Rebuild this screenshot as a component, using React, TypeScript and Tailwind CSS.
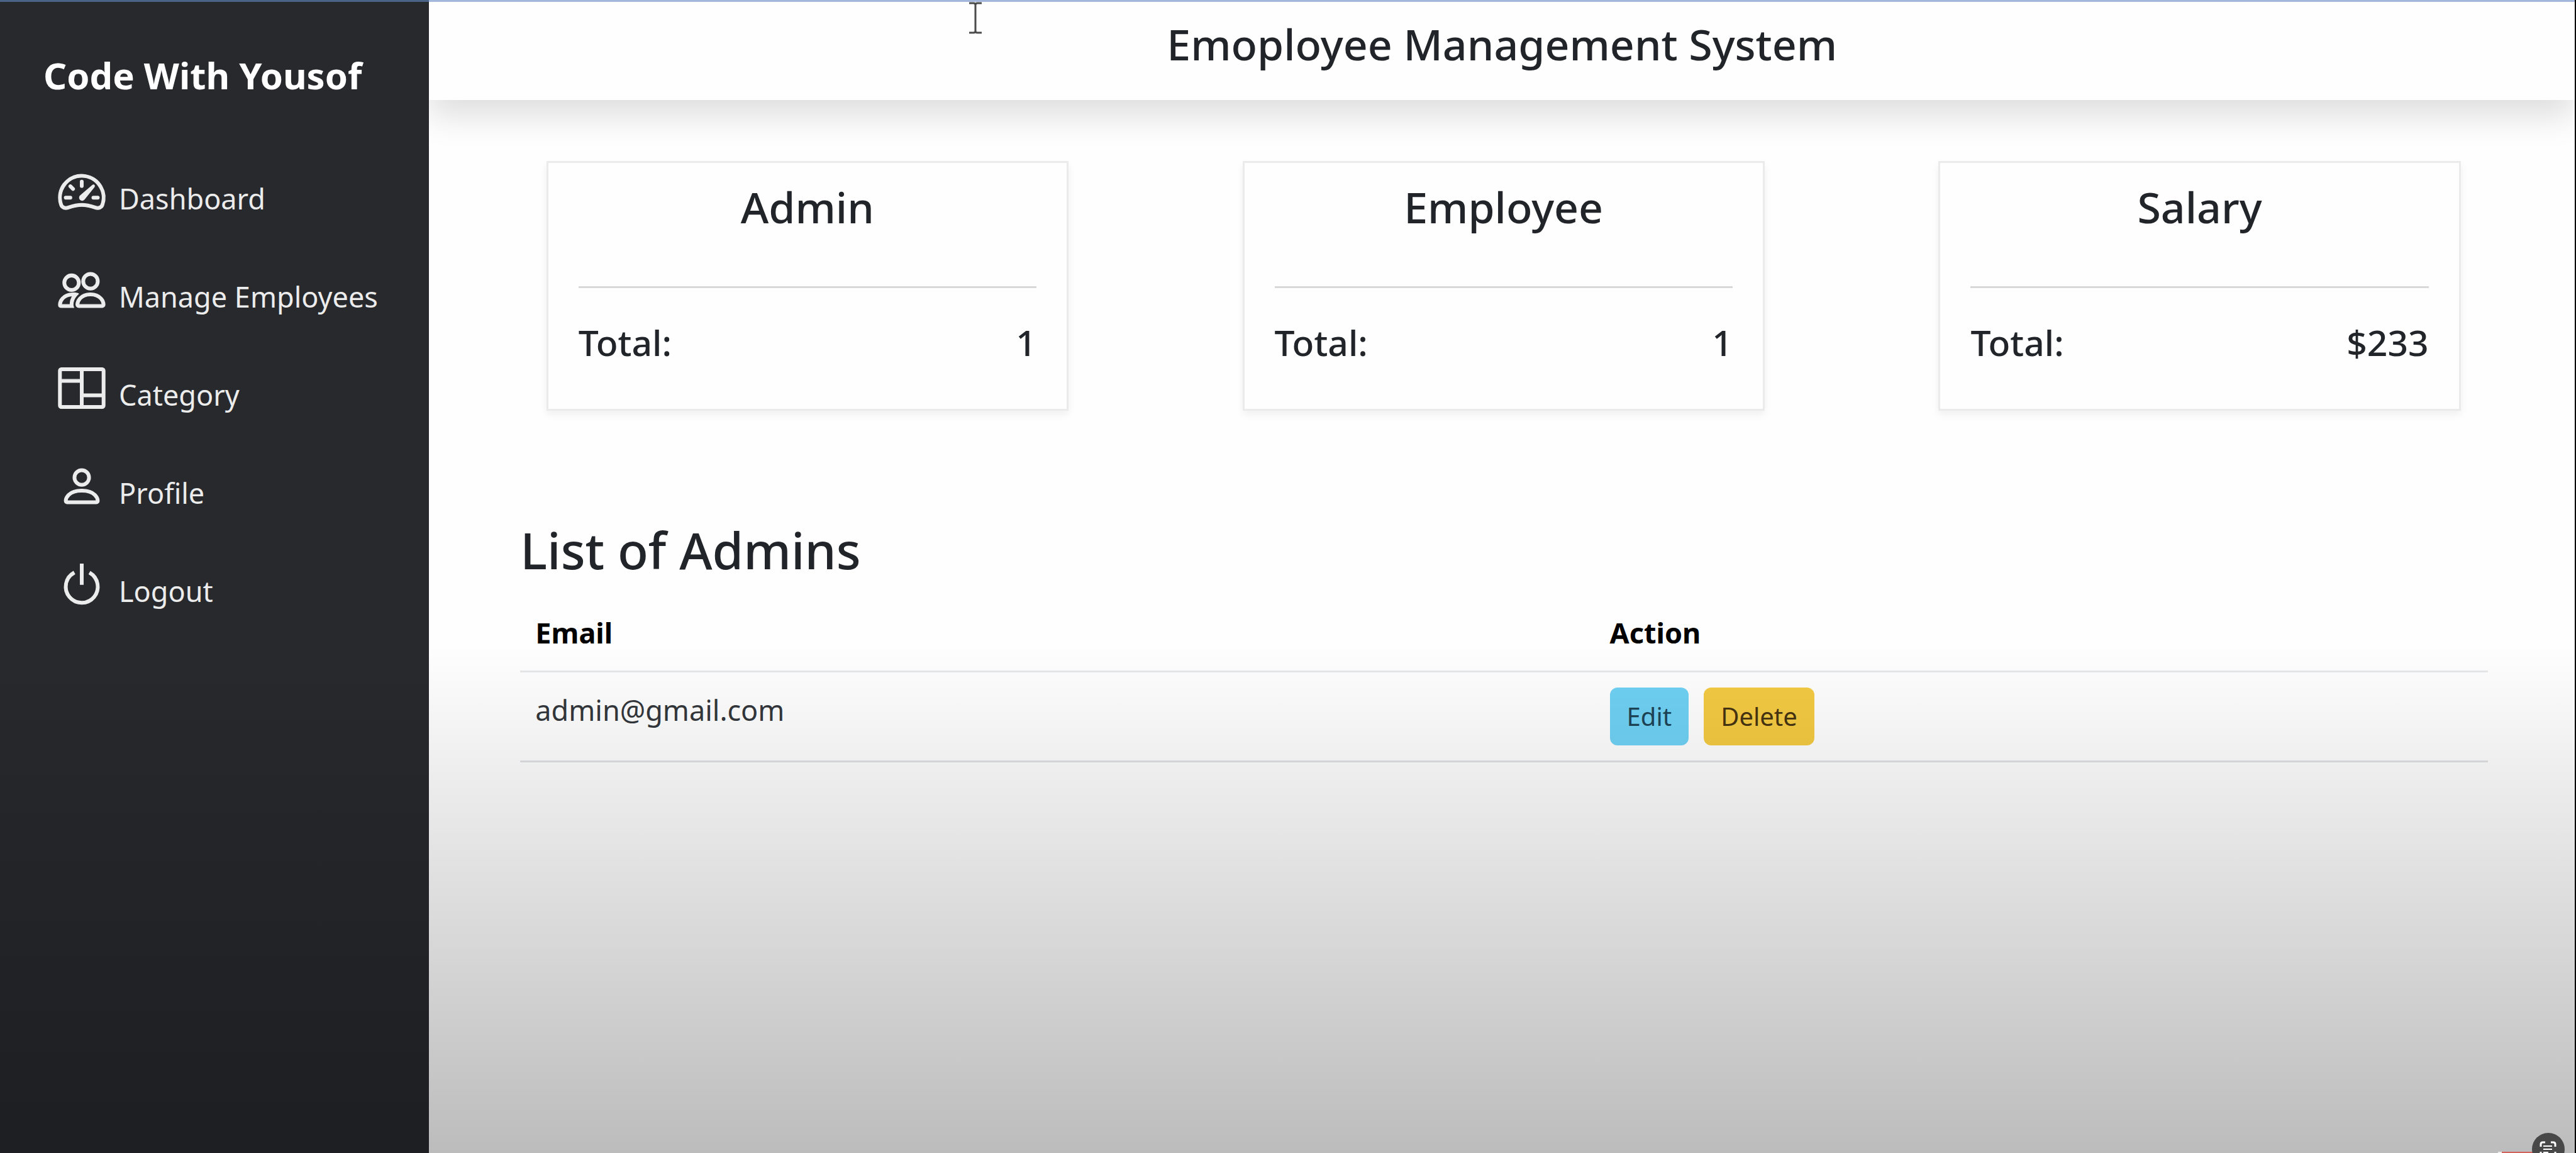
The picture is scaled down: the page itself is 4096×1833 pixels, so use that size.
import type { IconType } from "react-icons";
import { BsColumns, BsPeople, BsPerson, BsPower, BsSpeedometer2 } from "react-icons/bs";

const navItems: { label: string; href: string; Icon: IconType }[] = [
  { label: "Dashboard", href: "#dashboard", Icon: BsSpeedometer2 },
  { label: "Manage Employees", href: "#employees", Icon: BsPeople },
  { label: "Category", href: "#category", Icon: BsColumns },
  { label: "Profile", href: "#profile", Icon: BsPerson },
  { label: "Logout", href: "#logout", Icon: BsPower },
];

const summaries = [
  { title: "Admin", total: "1" },
  { title: "Employee", total: "1" },
  { title: "Salary", total: "$233" },
];

const admins = [{ email: "admin@gmail.com" }];

function Sidebar() {
  return (
    <aside className="relative z-10 w-1/6 shrink-0 bg-[#27292d] pt-[84px]">
      <a href="#dashboard" className="block pl-[69px] text-[58px] leading-[72px] font-bold text-white">
        Code With Yousof
      </a>
      <nav className="mt-[73px]">
        <ul>
          {navItems.map(({ label, href, Icon }) => (
            <li key={label}>
              <a
                href={href}
                className="flex items-end gap-[22px] py-[39px] pl-[93px] text-[45px] leading-[60px] text-[#ececec]"
              >
                <Icon
                  className="mb-1 size-[74px] shrink-0 overflow-visible stroke-current [stroke-width:0.3px]"
                  aria-hidden="true"
                />
                <span className="whitespace-nowrap">{label}</span>
              </a>
            </li>
          ))}
        </ul>
      </nav>
    </aside>
  );
}

function SummaryCard({ title, total }: { title: string; total: string }) {
  return (
    <section className="w-1/4 border-[3px] border-[#ebebeb] px-12 pt-7 pb-[70px] shadow-[0_6px_12px_rgba(0,0,0,0.06)]">
      <h2 className="text-center text-[68px] leading-[84px] font-medium">{title}</h2>
      <hr className="mt-[84px] border-t-[3px] border-[#d8d8d8]" />
      <div className="mt-[50px] flex justify-between text-[57px] leading-[72px] font-medium">
        <span>Total:</span>
        <span>{total}</span>
      </div>
    </section>
  );
}

function AdminTable() {
  return (
    <section className="mt-[173px] pr-[138px] pl-[145px]">
      <h2 className="text-[80px] leading-[96px] font-medium">List of Admins</h2>
      <table className="mt-6 w-full table-fixed border-collapse text-left text-[45px] leading-[72px]">
        <thead>
          <tr className="border-b-[3px] border-[#e6e8ea] font-bold text-black">
            <th scope="col" className="w-[54.6%] px-6 py-6">
              Email
            </th>
            <th scope="col" className="px-6 py-6">
              Action
            </th>
          </tr>
        </thead>
        <tbody>
          {admins.map(({ email }) => (
            <tr key={email} className="border-b-[3px] border-[#dfe1e4]">
              <td className="px-6 py-6 align-top text-[#33373b]">{email}</td>
              <td className="px-6 py-6">
                <div className="flex gap-6 text-[40px] leading-[60px]">
                  <button type="button" className="rounded-xl bg-[#6fd1f4] px-[27px] py-4 text-[#1d4456]">
                    Edit
                  </button>
                  <button type="button" className="rounded-xl bg-[#f4ca42] px-[27px] py-4 text-[#463411]">
                    Delete
                  </button>
                </div>
              </td>
            </tr>
          ))}
        </tbody>
      </table>
    </section>
  );
}

function TextCursor() {
  return (
    <svg
      viewBox="0 0 24 52"
      className="pointer-events-none absolute top-[3px] left-[1539px] h-[52px] w-6"
      fill="none"
      stroke="#4a4a4a"
      strokeWidth="3"
      aria-hidden="true"
    >
      <path d="M2 2h7q3 0 3 3q0-3 3-3h7M12 4v43M2 49h7q3 0 3-3q0 3 3 3h7" />
    </svg>
  );
}

function ScanBadge() {
  return (
    <button type="button" aria-label="Scan text" className="absolute right-4 -bottom-5 z-30 size-[52px]">
      <svg viewBox="0 0 52 52" className="size-full" fill="none" stroke="#fff" strokeWidth="3">
        <circle cx="26" cy="26" r="26" fill="#484848" stroke="none" />
        <path d="M14 22v-4q0-3 3-3h4M30 15h4q3 0 3 3v4M14 30v4q0 3 3 3h4M30 37h4q3 0 3-3v-4" />
        <path strokeWidth="2" d="M18 21h14M18 26h14M18 31h8" />
      </svg>
    </button>
  );
}

export default function App() {
  return (
    <div className="relative flex min-h-screen overflow-hidden border-r-2 border-black bg-[#fefefe] font-['Noto_Sans',sans-serif] text-[#212529]">
      <Sidebar />
      <main className="min-w-0 grow">
        <header className="bg-[#fefefe] pt-7 pb-[47px] shadow-[0_25px_50px_rgba(0,0,0,0.13)]">
          <h1 className="text-center text-[68px] leading-[84px] font-medium">Emoployee Management System</h1>
        </header>
        <div className="flex justify-around pt-[97px] pr-[43px] pl-12">
          {summaries.map((item) => (
            <SummaryCard key={item.title} {...item} />
          ))}
        </div>
        <AdminTable />
      </main>

      {/* Shade that darkens the lower part of the window */}
      <div className="pointer-events-none absolute inset-x-0 top-[56%] bottom-0 z-20 bg-linear-to-b from-black/0 to-black/26" />
      <div className="pointer-events-none absolute inset-x-0 top-0 z-20 flex h-[3px]">
        <span className="w-1/6 bg-[#4a6488]" />
        <span className="grow bg-[#a3b6dc]" />
      </div>
      <TextCursor />
      <div className="absolute right-16 bottom-0 z-20 flex h-0.5 w-[58px] bg-[#d3625d]">
        <span className="w-1.5 bg-[#ececec]" />
      </div>
      <ScanBadge />
    </div>
  );
}
